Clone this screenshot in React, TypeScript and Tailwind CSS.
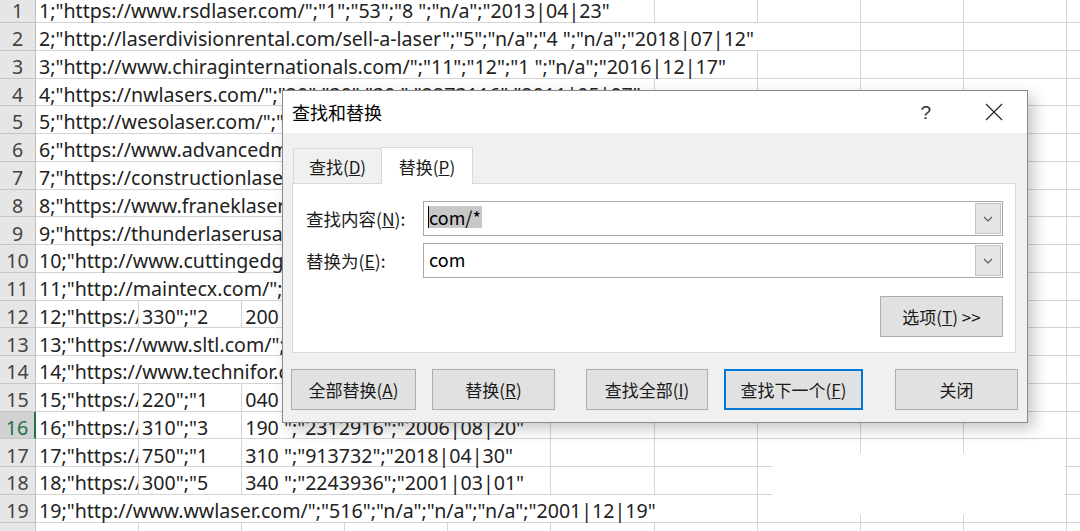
import React from 'react'

const COL = 103.1

type Cell = { text: string; span: number; clip?: boolean }
type Row = { n: number; cells: Cell[] }

const ROWS: Row[] = [
  { n: 1, cells: [{ text: '1;"https://www.rsdlaser.com/";"1";"53";"8 ";"n/a";"2013|04|23"', span: 6 }] },
  { n: 2, cells: [{ text: '2;"http://laserdivisionrental.com/sell-a-laser";"5";"n/a";"4 ";"n/a";"2018|07|12"', span: 8 }] },
  { n: 3, cells: [{ text: '3;"http://www.chiraginternationals.com/";"11";"12";"1 ";"n/a";"2016|12|17"', span: 7 }] },
  { n: 4, cells: [{ text: '4;"https://nwlasers.com/";"20";"30";"30 ";"2273116";"2011|05|07"', span: 6 }] },
  { n: 5, cells: [{ text: '5;"http://wesolaser.com/";"8";"n/a";"2 ";"n/a";"2015|03|11"', span: 6 }] },
  { n: 6, cells: [{ text: '6;"https://www.advancedmlaser.com/";"14";"n/a";"3 ";"n/a";"2012|09|02"', span: 7 }] },
  { n: 7, cells: [{ text: '7;"https://constructionlasers.com/";"2";"n/a";"1 ";"n/a";"2017|06|15"', span: 7 }] },
  { n: 8, cells: [{ text: '8;"https://www.franeklaser.com/";"9";"n/a";"2 ";"n/a";"2014|11|08"', span: 6 }] },
  { n: 9, cells: [{ text: '9;"https://thunderlaserusa.com/";"21";"n/a";"5 ";"n/a";"2016|01|27"', span: 6 }] },
  { n: 10, cells: [{ text: '10;"http://www.cuttingedgelasers.com/";"6";"n/a";"2 ";"n/a";"2010|05|19"', span: 7 }] },
  { n: 11, cells: [{ text: '11;"http://maintecx.com/";"3";"n/a";"1 ";"n/a";"2019|02|04"', span: 6 }] },
  {
    n: 12,
    cells: [
      { text: '12;"https://', span: 1, clip: true },
      { text: '330";"2', span: 1 },
      { text: '200 ";"1843021";"2010|02|11"', span: 3 },
    ],
  },
  { n: 13, cells: [{ text: '13;"https://www.sltl.com/";"7";"n/a";"3 ";"n/a";"2009|08|14"', span: 6 }] },
  { n: 14, cells: [{ text: '14;"https://www.technifor.com/";"12";"n/a";"4 ";"n/a";"2011|10|21"', span: 6 }] },
  {
    n: 15,
    cells: [
      { text: '15;"https://', span: 1, clip: true },
      { text: '220";"1', span: 1 },
      { text: '040 ";"1527730";"2003|07|09"', span: 3 },
    ],
  },
  {
    n: 16,
    cells: [
      { text: '16;"https://', span: 1, clip: true },
      { text: '310";"3', span: 1 },
      { text: '190 ";"2312916";"2006|08|20"', span: 3 },
    ],
  },
  {
    n: 17,
    cells: [
      { text: '17;"https://', span: 1, clip: true },
      { text: '750";"1', span: 1 },
      { text: '310 ";"913732";"2018|04|30"', span: 3 },
    ],
  },
  {
    n: 18,
    cells: [
      { text: '18;"https://', span: 1, clip: true },
      { text: '300";"5', span: 1 },
      { text: '340 ";"2243936";"2001|03|01"', span: 3 },
    ],
  },
  { n: 19, cells: [{ text: '19;"http://www.wwlaser.com/";"516";"n/a";"n/a";"n/a";"2001|12|19"', span: 7 }] },
  { n: 20, cells: [] },
]

const TOTAL_COLS = 11

function SheetRow({ row }: { row: Row }) {
  const used = row.cells.reduce((s, c) => s + c.span, 0)
  const empties = Array.from({ length: TOTAL_COLS - used })
  const selected = row.n === 16
  return (
    <div className="flex h-[27.78px] shrink-0">
      <div
        className={
          selected
            ? 'w-[36px] shrink-0 flex items-end justify-center pb-[1px] bg-[#d2d2d2] text-[#217346] border-b border-[#c6c6c6] border-r-2 border-r-[#217346]'
            : 'w-[36px] shrink-0 flex items-end justify-center pb-[1px] bg-[#e6e6e6] text-[#444] border-b border-[#c6c6c6] border-r border-r-[#bdbdbd]'
        }
      >
        {row.n}
      </div>
      {row.cells.map((c, i) => (
        <div
          key={i}
          style={{ width: c.span * COL }}
          className={
            'shrink-0 flex items-end pl-[3px] pb-[1px] whitespace-nowrap border-b border-r border-[#d4d4d4] text-[#222] ' +
            (c.clip ? 'overflow-hidden' : '')
          }
        >
          {c.text}
        </div>
      ))}
      {empties.map((_, i) => (
        <div key={'e' + i} className="w-[103.1px] shrink-0 border-b border-r border-[#d4d4d4]" />
      ))}
    </div>
  )
}

function Btn({
  children,
  className = '',
  focus = false,
}: {
  children: React.ReactNode
  className?: string
  focus?: boolean
}) {
  return (
    <div
      className={
        'h-[41px] flex items-center justify-center bg-[#e1e1e1] text-[#1a1a1a] ' +
        (focus ? 'border-2 border-[#0078d7] ' : 'border border-[#adadad] ') +
        className
      }
    >
      {children}
    </div>
  )
}

function Chevron() {
  return (
    <svg width="10" height="6" viewBox="0 0 10 6">
      <path d="M1 1l4 4 4-4" fill="none" stroke="#555" strokeWidth="1.1" />
    </svg>
  )
}

function Combo({ children }: { children: React.ReactNode }) {
  return (
    <div className="w-[580px] h-[35px] flex items-center bg-white border border-[#a8a8a8] pl-[4px] pr-[1px]">
      <div className="flex-1 flex items-center text-[18px] text-black -mt-[4px]">{children}</div>
      <div className="w-[26px] h-[31px] flex items-center justify-center bg-[#e5e5e5] border border-[#c4c4c4]">
        <Chevron />
      </div>
    </div>
  )
}

function Dialog() {
  return (
    <div className="absolute left-[282px] top-[90px] w-[746px] h-[333px] flex flex-col bg-[#f0f0f0] border border-[#8a8a8a] shadow-[6px_6px_14px_rgba(0,0,0,0.22)] text-[17px] text-[#1a1a1a] font-['Noto_Sans_CJK_SC',sans-serif]">
      {/* title bar */}
      <div className="h-[42px] shrink-0 flex items-center bg-white pl-[9px]">
        <span className="text-[18px] text-black">查找和替换</span>
        <span className="ml-auto text-[19px] text-[#333] font-['Liberation_Sans',sans-serif] mr-[54px]">?</span>
        <svg width="18" height="18" viewBox="0 0 18 18" className="mr-[24px]">
          <path d="M1 1l16 16M17 1L1 17" stroke="#222" strokeWidth="1.1" />
        </svg>
      </div>

      {/* tabs */}
      <div className="flex items-end pl-[10px] pt-[13px] h-[50px] shrink-0">
        <div className="w-[88px] h-[35px] flex items-center justify-center bg-[#f0f0f0] border-t border-l border-[#d9d9d9]">
          查找(<span className="underline">D</span>)
        </div>
        <div className="w-[92px] h-[37px] -mb-[1px] flex items-center justify-center bg-white border-t border-l border-r border-[#d9d9d9] relative z-10">
          替换(<span className="underline">P</span>)
        </div>
      </div>

      {/* panel */}
      <div className="mx-[9px] mr-[11px] h-[170px] shrink-0 bg-white border border-[#d9d9d9] flex flex-col pl-[13px] pt-[17px]">
        <div className="flex items-center gap-[13px]">
          <span className="w-[104px] text-[17.5px]">
            查找内容(<span className="underline">N</span>):
          </span>
          <Combo>
            <span className="bg-[#c8c8c8] leading-[22px] pr-[1px] border-l border-black">com/*</span>
          </Combo>
        </div>
        <div className="flex items-center gap-[13px] mt-[7px]">
          <span className="w-[104px] text-[17.5px]">
            替换为(<span className="underline">E</span>):
          </span>
          <Combo>
            <span className="pl-[1px]">com</span>
          </Combo>
        </div>
        <div className="flex justify-end pr-[12px] mt-[18px]">
          <Btn className="w-[123px]">
            选项(<span className="underline">T</span>)&nbsp;&gt;&gt;
          </Btn>
        </div>
      </div>

      {/* buttons */}
      <div className="flex pl-[8px] mt-[16px]">
        <Btn className="w-[125px]">
          全部替换(<span className="underline">A</span>)
        </Btn>
        <Btn className="w-[123px] ml-[16px]">
          替换(<span className="underline">R</span>)
        </Btn>
        <Btn className="w-[122px] ml-[31px]">
          查找全部(<span className="underline">I</span>)
        </Btn>
        <Btn focus className="w-[139px] ml-[16px]">
          查找下一个(<span className="underline">F</span>)
        </Btn>
        <Btn className="w-[123px] ml-[32px]">关闭</Btn>
      </div>
    </div>
  )
}

export default function App() {
  return (
    <div className="relative w-[1080px] h-[531px] overflow-hidden bg-white text-[19.6px] leading-none font-['Noto_Sans',sans-serif]">
      <div className="flex flex-col -mt-[4.78px]">
        {ROWS.map((r) => (
          <SheetRow key={r.n} row={r} />
        ))}
      </div>
      {/* blank patch over lower right cells */}
      <div className="absolute left-[772px] top-[453px] w-[293px] h-[62px] bg-white" />
      <Dialog />
    </div>
  )
}
